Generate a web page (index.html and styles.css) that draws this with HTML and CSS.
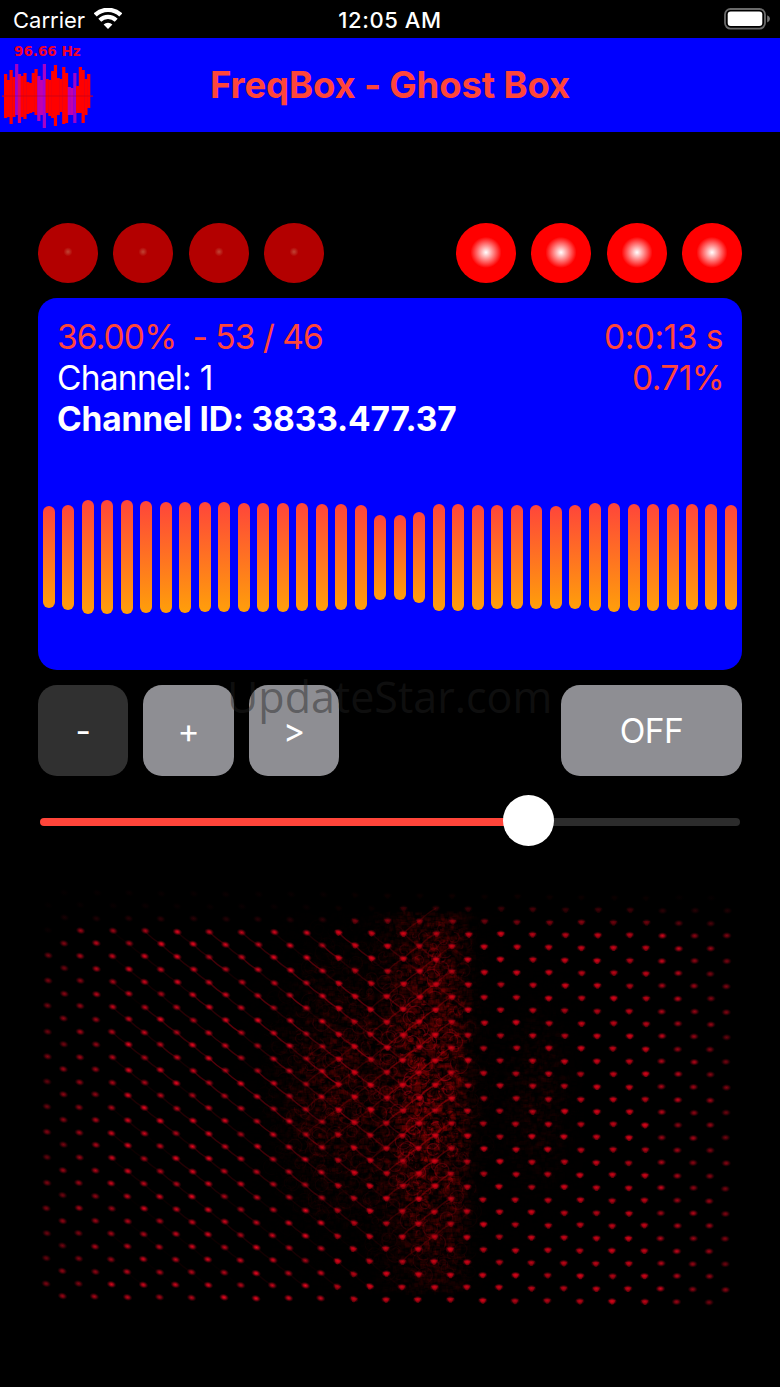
FILE: index.html
```html
<!DOCTYPE html>
<html>
  <head>
    <meta charset="utf-8">
    <title>FreqBox - Ghost Box</title>
    <link rel="stylesheet" href="styles.css">
  </head>
<body>

  <div class="status">
    <div class="carrier">
      <span>Carrier</span>
      <svg class="wifi" width="28" height="21" viewBox="0 0 28 21">
        <path d="M1.2 7 A18.5 18.5 0 0 1 26.8 7" fill="none" stroke="#fff" stroke-width="4.4"/>
        <path d="M5.8 12.2 A11.8 11.8 0 0 1 22.2 12.2" fill="none" stroke="#fff" stroke-width="4.2"/>
        <path d="M9.6 16.5 A6.2 6.2 0 0 1 18.4 16.5 L14 21 Z" fill="#fff"/>
      </svg>
    </div>
    <div class="clock">12:05 AM</div>
    <svg class="battery" width="47" height="22" viewBox="0 0 47 22">
      <rect x="1" y="1" width="40" height="19.6" rx="5.5" fill="none" stroke="#6a6a6a" stroke-width="1.8"/>
      <rect x="3.7" y="3.6" width="34.6" height="14.4" rx="3" fill="#fff"/>
      <path d="M43.2 7.2 Q46 8.4 46 10.8 Q46 13.2 43.2 14.4 Z" fill="#777"/>
    </svg>
  </div>

  <div class="header">
    <div class="logo">
      <div class="hz">96.66 Hz</div>
      <svg class="wave" width="94" height="68" viewBox="0 0 94 68"></svg>
    </div>
    <h1>FreqBox - Ghost Box</h1>
  </div>

  <div class="main">
    <div class="leds">
      <div class="ledGroup">
        <div class="led dim"></div>
        <div class="led dim"></div>
        <div class="led dim"></div>
        <div class="led dim"></div>
      </div>
      <div class="ledGroup">
        <div class="led lit"></div>
        <div class="led lit"></div>
        <div class="led lit"></div>
        <div class="led lit"></div>
      </div>
    </div>

    <div class="panel">
      <div class="info">
        <div class="row red"><span class="ratio">36.00%&nbsp; - 53 / 46</span><span class="time">0:0:13 s</span></div>
        <div class="row"><span class="channel">Channel: 1</span><span class="percent red">0.71%</span></div>
        <div class="row bold"><span>Channel ID: 3833.477.37</span></div>
      </div>
      <div class="bars"></div>
    </div>

    <div class="buttons">
      <div class="btn off">-</div>
      <div class="btn">+</div>
      <div class="btn">&gt;</div>
      <div class="btn wide">OFF</div>
      <div class="watermark">UpdateStar.com</div>
    </div>

    <div class="slider">
      <div class="fill"></div>
      <div class="knob"></div>
      <div class="rest"></div>
    </div>
  </div>

  <canvas class="camera" width="780" height="500"></canvas>

  <script src="script.js"></script>
</body>
</html>
```
FILE: styles.css
```css
html
{
  background-color: #000;
}
body
{
  width: 780px;
  height: 1387px;
  margin: 0;
  background-color: #000;
  color: #fff;
  font-family: Inter, "Liberation Sans", sans-serif;
  display: flex;
  flex-direction: column;
  overflow: hidden;
}
.status
{
  height: 38px;
  flex: none;
  display: grid;
  grid-template-columns: 1fr auto 1fr;
  align-items: center;
  padding: 0 13px;
  font-size: 22px;
}
.carrier
{
  display: flex;
  align-items: center;
  gap: 9px;
  padding-top: 2px;
}
.wifi
{
  margin-top: -4px;
}
.clock
{
  font-weight: 500;
  letter-spacing: 0.6px;
  padding-top: 2px;
}
.battery
{
  justify-self: end;
  margin-right: -4px;
}
.header
{
  height: 94px;
  flex: none;
  background-color: #0000ff;
  display: grid;
  grid-template-columns: 94px 1fr 94px;
  align-items: center;
}
.logo
{
  height: 94px;
}
.hz
{
  height: 26px;
  line-height: 27px;
  color: #f0002c;
  font-family: "DejaVu Sans", sans-serif;
  font-weight: bold;
  font-size: 13.5px;
  padding-left: 14px;
  white-space: nowrap;
}
.wave
{
  display: block;
}
h1
{
  margin: 0;
  padding-bottom: 1px;
  text-align: center;
  color: #ff453a;
  font-size: 36.5px;
  font-weight: 650;
  letter-spacing: -0.15px;
  white-space: nowrap;
}
.main
{
  padding: 91px 38px 0;
}
.leds
{
  display: flex;
  justify-content: space-between;
}
.ledGroup
{
  display: flex;
  gap: 15.4px;
}
.led
{
  width: 60px;
  height: 60px;
  border-radius: 50%;
}
.dim
{
  background: radial-gradient(circle at 50% 48%, #c04535 0, #b30000 4.5px);
}
.lit
{
  background: radial-gradient(circle at 50% 49%, #fff 0, #ff0000 15.5px);
}
.panel
{
  height: 372px;
  margin-top: 15px;
  border-radius: 19px;
  background-color: #0000ff;
}
.info
{
  height: 165px;
  padding: 19px 19px 0;
  font-size: 33.5px;
}
.row
{
  display: flex;
  justify-content: space-between;
  height: 40.8px;
  line-height: 40.8px;
  white-space: nowrap;
}
.ratio
{
  letter-spacing: -0.85px;
  word-spacing: -0.4px;
}
.channel
{
  letter-spacing: -0.75px;
}
.time
{
  letter-spacing: -0.5px;
}
.percent
{
  letter-spacing: -0.6px;
  margin-right: -1px;
}
.red
{
  color: #ff453a;
}
.bold
{
  font-weight: 700;
  letter-spacing: -0.16px;
}
.bars
{
  height: 150px;
  padding: 0 5px;
  display: flex;
  justify-content: space-between;
  align-items: center;
}
.bar
{
  width: 12px;
  border-radius: 6px;
  background: linear-gradient(#ff453a, #ff9f0a);
}
.buttons
{
  position: relative;
  display: flex;
  gap: 15px;
  margin-top: 15px;
}
.btn
{
  width: 90.4px;
  height: 91px;
  border-radius: 19px;
  background-color: #8e8e93;
  font-size: 33.5px;
  line-height: 93px;
  text-align: center;
}
.off
{
  background-color: #303030;
}
.wide
{
  width: 181px;
  margin-left: auto;
  letter-spacing: -0.6px;
}
.watermark
{
  position: absolute;
  left: 189px;
  top: -18px;
  color: rgba(33, 33, 33, 0.45);
  font-family: "Open Sans", sans-serif;
  font-size: 43px;
  line-height: 60px;
}
.slider
{
  display: flex;
  align-items: center;
  height: 52px;
  margin-top: 18px;
  padding: 0 2px;
}
.fill
{
  width: 464px;
  height: 8px;
  margin-top: 3px;
  border-radius: 4px 0 0 4px;
  background-color: #ff453a;
}
.knob
{
  width: 51px;
  height: 51px;
  margin: 0 -1px;
  border-radius: 50%;
  background-color: #fff;
  z-index: 1;
}
.rest
{
  flex: 1;
  height: 8px;
  margin-top: 3px;
  border-radius: 0 4px 4px 0;
  background-color: #2c2c2c;
}
.camera
{
  display: block;
  width: 780px;
  height: 500px;
  flex: none;
}
```
FILE: script.js
```javascript
// height of every bar in the panel
var heights = [102, 105, 113.5, 113.5, 113.5, 112.5, 111, 111, 110.5, 110, 109, 109,
  109, 108, 107, 106, 105, 85, 85, 91, 107, 107, 105, 104, 104, 104, 103, 104, 107.5,
  109, 107, 107, 106, 106, 106, 105];

// logo columns: top, bottom
var wave = [[10, 54], [16, 53], [6, 60], [13, 53], [0, 51], [10, 59], [12, 53], [9, 55],
  [18, 50], [19, 49], [9, 48], [5, 51], [12, 57], [16, 51], [0, 64], [15, 49], [16, 52],
  [7, 54], [1, 62], [14, 51], [15, 48], [3, 60], [9, 59], [23, 51], [24, 51], [9, 59],
  [22, 49], [3, 49], [6, 59], [15, 51], [10, 44]];
var purple = { 4: "#a000c8", 5: "#e0006a", 12: "#b800b8", 13: "#c000b0", 14: "#a800c8", 23: "#b800b8", 24: "#c000b0", 25: "#a000c8" };

var seed = 7;
function rnd()
{
  seed = (seed * 16807) % 2147483647;
  return seed / 2147483647;
}

function drawBars()
{
  var box = document.getElementsByClassName("bars")[0];
  for(var h of heights)
  {
    var bar = document.createElement("div");
    bar.className = "bar";
    bar.style.height = h + "px";
    box.appendChild(bar);
  }
}

function drawLogo()
{
  var str = '<rect x="2" y="31.5" width="91" height="1.2" fill="#c00030"/>';
  for(var i = 0; i < wave.length; i++)
  {
    str += '<rect x="' + (4 + i * 2.77) + '" y="' + wave[i][0] + '" width="3.2" height="' +
      (wave[i][1] - wave[i][0]) + '" fill="' + (purple[i] || "#ff0000") + '"/>';
  }
  str += '<rect x="4" y="31.5" width="86" height="1" fill="#900030" opacity="0.4"/>';
  document.getElementsByClassName("wave")[0].innerHTML = str;
}

function blob(x, y, cx, cy, rx, ry)
{
  var dx = (x - cx) / rx;
  var dy = (y - cy) / ry;
  return Math.exp(-(dx * dx + dy * dy) * 1.2);
}

// brightness of the surface inside the canvas
function glow(x, y)
{
  var g = 1.15 * blob(x, y, 430, 235, 48, 190);
  if(x > 455)
  {
    g *= Math.max(0.3, 1 - (x - 455) / 30);
  }
  g += 0.5 * blob(x, y, 332, 240, 55, 115) + 0.25 * blob(x, y, 535, 250, 35, 90);
  return Math.min(1, g);
}

function drawCamera()
{
  var ctx = document.getElementsByClassName("camera")[0].getContext("2d");
  var x, y, i, g;

  // grain
  for(i = 0; i < 26000; i++)
  {
    x = 230 + rnd() * 350;
    y = 65 + rnd() * 380;
    g = glow(x, y);
    ctx.fillStyle = "rgba(180, 0, 8, " + g * 0.22 * rnd() + ")";
    ctx.fillRect(x, y, 2 + rnd() * 5, 2 + rnd() * 3);
  }
  for(i = 0; i < 1300; i++)
  {
    x = 260 + rnd() * 230;
    y = 80 + rnd() * 350;
    g = glow(x, y);
    ctx.strokeStyle = rnd() < 0.55 ? "rgba(0, 0, 0, " + g * 0.6 + ")" : "rgba(180, 0, 20, " + g * 0.4 + ")";
    ctx.lineWidth = 1.2;
    ctx.beginPath();
    ctx.arc(x, y, 2 + rnd() * 7, rnd() * 6, rnd() * 6);
    ctx.stroke();
  }

  // dots on a staggered grid
  for(var r = -3; r < 30; r++)
  {
    var odd = Math.abs(r % 2);
    for(var c = 0; c < 22 - odd; c++)
    {
      x = 48 + odd * 16.2 + c * 32.33 - r * 0.06;
      y = 84.3 + r * 12.62 + (x - 48) * 0.0085;
      g = glow(x, y);

      var edge = Math.min(1, 0.55 + Math.min(x - 40, 740 - x) / 200);
      if(r < 0)
      {
        edge *= r == -1 ? (x > 330 ? 0.5 : 0.2) : (x > 380 ? 0.65 + r * 0.2 : 0.05);
      }
      if(r == 0 && x < 70)
      {
        edge = 0.05;
      }
      edge *= 0.7 + rnd() * 0.3;
      edge = Math.max(0, edge);

      // streak towards the next dot, left half only
      var s = blob(x, y, 290, 190, 170, 190);
      if(x > 110 && x < 460 && r >= 0 && r < 28)
      {
        ctx.strokeStyle = "rgba(180, 0, 20, " + s * (0.1 + rnd() * 0.55) + ")";
        ctx.lineWidth = 1.5;
        ctx.beginPath();
        ctx.moveTo(x, y);
        ctx.quadraticCurveTo(x + 7, y + 8, x + 16, y + 12.6);
        ctx.stroke();
      }
      if(g > 0.4)
      {
        ctx.strokeStyle = "rgba(180, 0, 10, " + g * 0.5 + ")";
        ctx.beginPath();
        ctx.moveTo(x, y);
        ctx.quadraticCurveTo(x - 10, y + 5, x - 16, y + 12.6);
        ctx.stroke();
      }

      // soft halo, then the bright core
      ctx.save();
      ctx.translate(x + rnd() - 0.5, y + rnd() - 0.5);
      if(x < 380)
      {
        ctx.rotate(0.3);
      }
      ctx.scale(1.4, 1);
      var grad = ctx.createRadialGradient(0, 0, 0, 0, 0, 3.6);
      grad.addColorStop(0, "rgba(240, 10, " + (g > 0.3 ? 15 : 34) + ", " + edge + ")");
      grad.addColorStop(0.4, "rgba(200, 2, 24, " + edge * 0.8 + ")");
      grad.addColorStop(1, "rgba(120, 0, 15, 0)");
      ctx.fillStyle = grad;
      ctx.fillRect(-4, -4, 8, 8);
      if(x > 330 && x < 650)
      {
        ctx.fillStyle = "rgba(200, 2, 18, " + edge * 0.5 + ")";
        ctx.beginPath();
        ctx.moveTo(-2.6, -1.3);
        ctx.lineTo(2.6, -1.3);
        ctx.lineTo(0.9, 3.4);
        ctx.lineTo(-0.6, 3.4);
        ctx.fill();
      }
      ctx.restore();
    }
  }
}

drawBars();
drawLogo();
drawCamera();
```
